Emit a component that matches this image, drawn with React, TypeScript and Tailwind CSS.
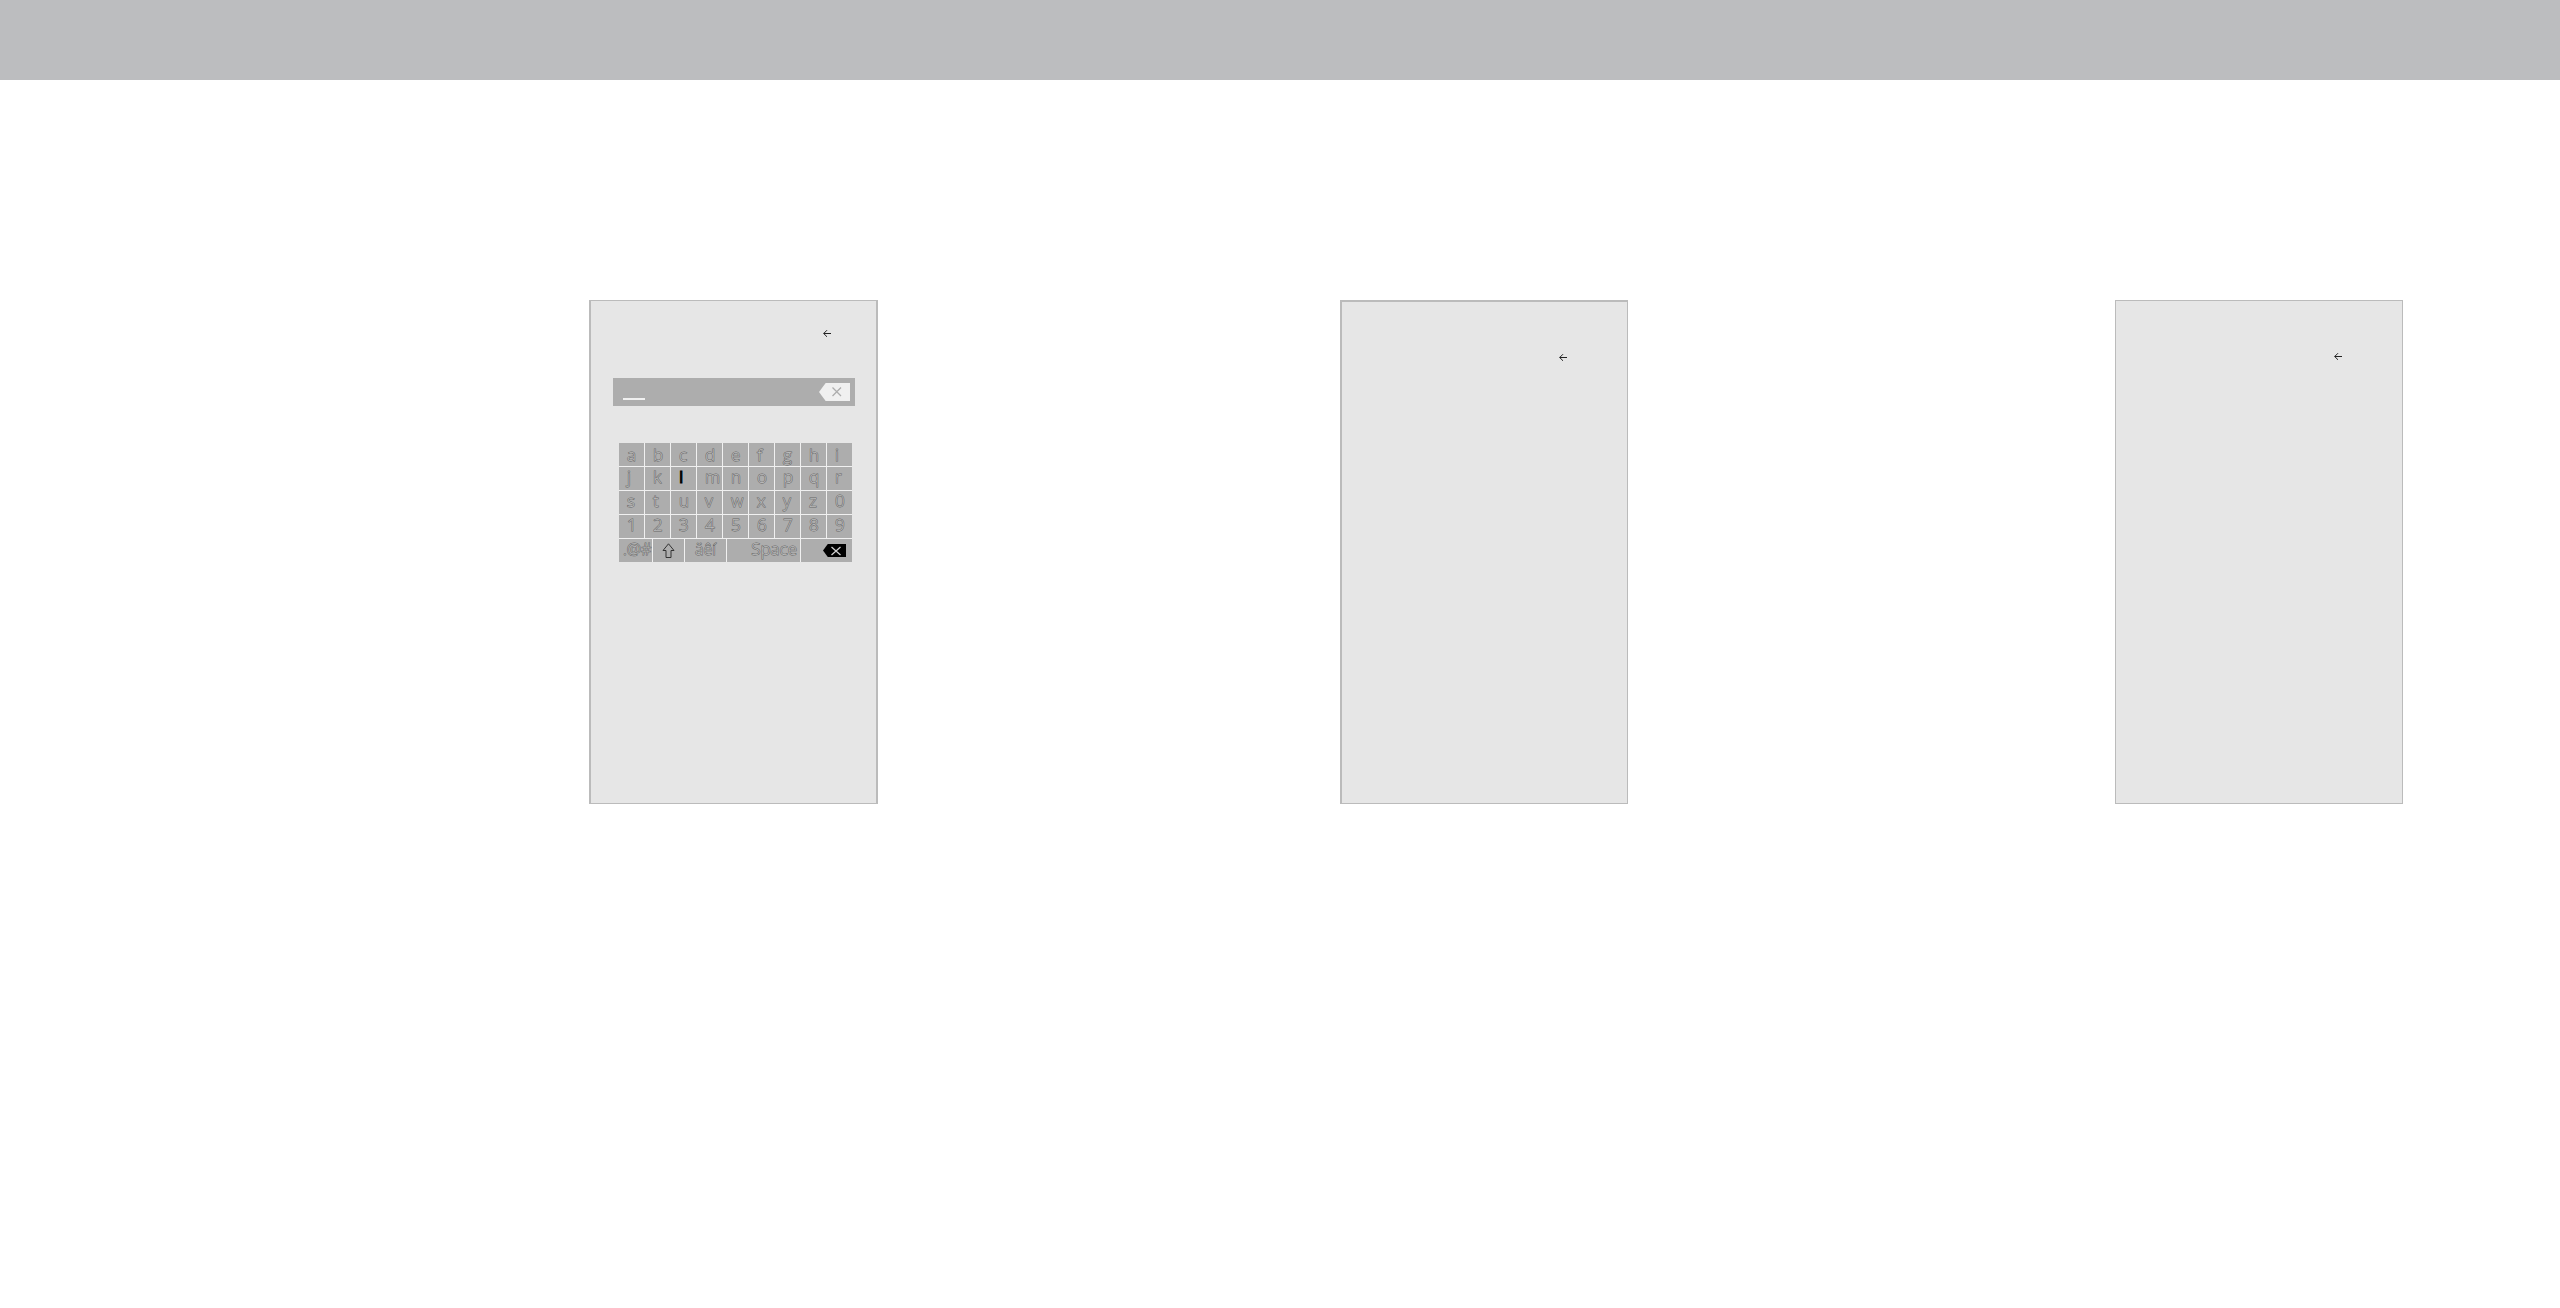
import React, { useState } from 'react'

const ROWS = ['abcdefghi', 'jklmnopqr', 'stuvwxyz0', '123456789']

const KEY_CLASS = 'flex h-[23px] min-w-0 bg-[#adadad] leading-5'
const OUTLINE_CLASS = 'font-light text-[#bcbcbc] [-webkit-text-stroke:1px_#686868] [paint-order:stroke_fill]'

function BackArrow() {
  return (
    <button type="button" aria-label="Back" className="block text-[#222222]">
      <svg width="8" height="8" viewBox="0 0 8 8" fill="none" stroke="currentColor" strokeWidth="1">
        <path d="M8 3.5H0.7M4 0.2L0.7 3.5L4 6.8" />
      </svg>
    </button>
  )
}

interface BackspaceIconProps {
  width: number
  height: number
  fill: string
  stroke: string
}

function BackspaceIcon({ width, height, fill, stroke }: BackspaceIconProps) {
  return (
    <svg width={width} height={height} viewBox={`0 0 ${width} ${height}`} fill="none">
      <path d={`M0 ${height / 2}L${height * 0.37} 0H${width}V${height}H${height * 0.37}Z`} fill={fill} />
      <path
        d={
          width > 25
            ? 'M13.5 4.5L22 13M22 4.5L13.5 13'
            : 'M8.5 3L17.5 11M17.5 3L8.5 11'
        }
        stroke={stroke}
        strokeWidth="1.3"
      />
    </svg>
  )
}

function SearchField({ value, onChange }: { value: string; onChange: (value: string) => void }) {
  return (
    <div className="flex h-7 items-center bg-[#adadad] pl-[10px] pr-[5px]">
      <span className="mb-[6px] h-[2px] w-[22px] shrink-0 self-end bg-[#f0f0f0]" />
      <input
        type="text"
        aria-label="Search"
        value={value}
        onChange={(e) => onChange(e.target.value)}
        className="h-full w-0 min-w-0 flex-1 bg-transparent text-[17px] text-[#f0f0f0] outline-none"
      />
      <button type="button" aria-label="Clear" onClick={() => onChange('')} className="shrink-0">
        <BackspaceIcon width={31} height={18} fill="#f0f0f0" stroke="#adadad" />
      </button>
    </div>
  )
}

function Keyboard({ onType, onDelete }: { onType: (key: string) => void; onDelete: () => void }) {
  return (
    <div className="flex flex-col gap-px bg-[#f0f0f0]">
      {ROWS.map((row) => (
        <div key={row} className="grid grid-cols-9 gap-px">
          {row.split('').map((key) => (
            <button
              key={key}
              type="button"
              onClick={() => onType(key)}
              className={`${KEY_CLASS} pl-2 text-[17px] ${row === ROWS[0] ? 'items-center' : 'items-start'} ${
                key === 'l' ? 'text-black [-webkit-text-stroke:1px_#000000]' : OUTLINE_CLASS
              }`}
            >
              {key}
            </button>
          ))}
        </div>
      ))}
      <div className="grid grid-cols-[33fr_31fr_41fr_73fr_51fr] gap-px">
        <button type="button" className={`${KEY_CLASS} ${OUTLINE_CLASS} pl-1 text-base`}>
          .@#
        </button>
        <button type="button" aria-label="Shift" className={`${KEY_CLASS} items-center justify-center`}>
          <svg width="13" height="15" viewBox="0 0 13 15" fill="none" stroke="#333333" strokeWidth="1">
            <path d="M6.5 0.8L12 7.5H9V14.5H4V7.5H1Z" />
          </svg>
        </button>
        <button type="button" className={`${KEY_CLASS} ${OUTLINE_CLASS} pl-[10px] text-base`}>
          äêí
        </button>
        <button
          type="button"
          onClick={() => onType(' ')}
          className={`${KEY_CLASS} ${OUTLINE_CLASS} justify-end pr-[3px] text-[17px]`}
        >
          Space
        </button>
        <button
          type="button"
          aria-label="Backspace"
          onClick={onDelete}
          className={`${KEY_CLASS} items-center justify-end pr-[6px]`}
        >
          <BackspaceIcon width={23} height={13} fill="#000000" stroke="#d0d0d0" />
        </button>
      </div>
    </div>
  )
}

export default function App() {
  const [query, setQuery] = useState('')

  return (
    <div className="min-h-screen bg-white font-['Open_Sans','Noto_Sans',sans-serif]">
      <header className="h-20 bg-[#bcbdbf]" />

      <main className="grid grid-cols-[589fr_289fr_462fr_288fr_487fr_288fr_157fr] pt-[220px]">
        <section className="col-start-2 min-h-[504px] min-w-0 border-x-2 border-y border-[#bbbbbb] bg-[#e6e6e6] pt-[29px]">
          <div className="flex justify-end pr-[45px]">
            <BackArrow />
          </div>
          <div className="mt-10 pl-[22px] pr-[21px]">
            <SearchField value={query} onChange={setQuery} />
          </div>
          <div className="mt-[37px] pl-7 pr-6">
            <Keyboard
              onType={(key) => setQuery(query + key)}
              onDelete={() => setQuery(query.slice(0, -1))}
            />
          </div>
        </section>

        <section className="col-start-4 flex min-h-[504px] min-w-0 items-start justify-end border border-l-2 border-t-2 border-[#bbbbbb] bg-[#e6e6e6] pr-[60px] pt-[52px]">
          <BackArrow />
        </section>

        <section className="col-start-6 flex min-h-[504px] min-w-0 items-start justify-end border border-[#bbbbbb] bg-[#e6e6e6] pr-[60px] pt-[52px]">
          <BackArrow />
        </section>
      </main>
    </div>
  )
}
